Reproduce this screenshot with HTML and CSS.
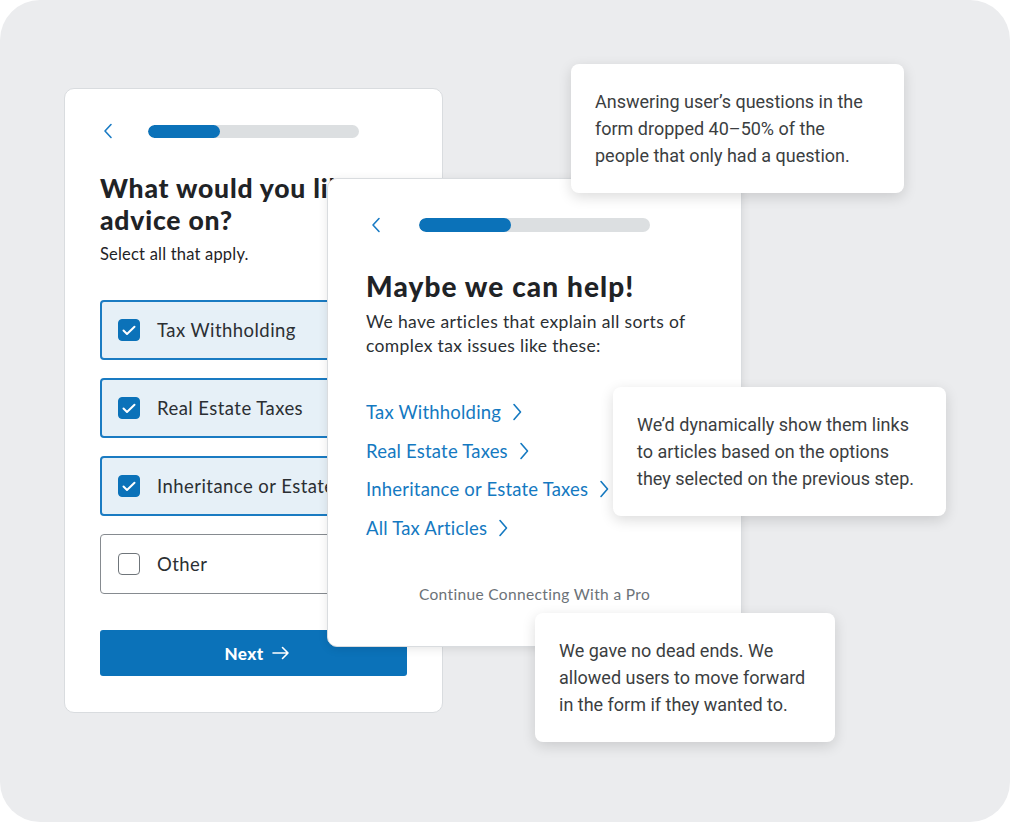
FILE: index.html
```html
<!DOCTYPE html>
<html lang="en">
<head>
<meta charset="utf-8">
<title>Tax advice flow</title>
<link rel="stylesheet" href="styles.css">
</head>
<body>
<div class="canvas">
  <section class="card card-form">
    <div class="topbar">
      <svg class="back" width="10" height="16" viewBox="0 0 10 16"><path d="M8 1.5 L2 8 L8 14.5" fill="none" stroke="#1a7bc4" stroke-width="1.6" stroke-linecap="round" stroke-linejoin="round"/></svg>
      <div class="progress p1"><div class="fill" style="width:34%"></div></div>
    </div>
    <h1 class="title">What would you like advice on?</h1>
    <p class="sub">Select all that apply.</p>
    <div class="options">
      <div class="option checked"><span class="box"><svg width="14" height="11" viewBox="0 0 14 11"><path d="M1.5 5.5 L5 9 L12.5 1.8" fill="none" stroke="#fff" stroke-width="2" stroke-linecap="round" stroke-linejoin="round"/></svg></span><span class="label">Tax Withholding</span></div>
      <div class="option checked"><span class="box"><svg width="14" height="11" viewBox="0 0 14 11"><path d="M1.5 5.5 L5 9 L12.5 1.8" fill="none" stroke="#fff" stroke-width="2" stroke-linecap="round" stroke-linejoin="round"/></svg></span><span class="label">Real Estate Taxes</span></div>
      <div class="option checked"><span class="box"><svg width="14" height="11" viewBox="0 0 14 11"><path d="M1.5 5.5 L5 9 L12.5 1.8" fill="none" stroke="#fff" stroke-width="2" stroke-linecap="round" stroke-linejoin="round"/></svg></span><span class="label">Inheritance or Estate Taxes</span></div>
      <div class="option"><span class="box"></span><span class="label">Other</span></div>
    </div>
    <button class="next">Next <svg width="18" height="14" viewBox="0 0 18 14"><path d="M1 7 H16 M10.5 1.5 L16 7 L10.5 12.5" fill="none" stroke="#fff" stroke-width="1.6" stroke-linecap="round" stroke-linejoin="round"/></svg></button>
  </section>

  <section class="card card-help">
    <div class="topbar">
      <svg class="back" width="10" height="16" viewBox="0 0 10 16"><path d="M8 1.5 L2 8 L8 14.5" fill="none" stroke="#1a7bc4" stroke-width="1.6" stroke-linecap="round" stroke-linejoin="round"/></svg>
      <div class="progress p2"><div class="fill" style="width:40%"></div></div>
    </div>
    <h2 class="title2">Maybe we can help!</h2>
    <p class="desc">We have articles that explain all sorts of complex tax issues like these:</p>
    <ul class="links">
      <li><a>Tax Withholding</a><svg class="chev" width="10" height="18" viewBox="0 0 10 18"><path d="M2 1.5 L8.5 9 L2 16.5" fill="none" stroke="#1479c1" stroke-width="1.6" stroke-linecap="round" stroke-linejoin="round"/></svg></li>
      <li><a>Real Estate Taxes</a><svg class="chev" width="10" height="18" viewBox="0 0 10 18"><path d="M2 1.5 L8.5 9 L2 16.5" fill="none" stroke="#1479c1" stroke-width="1.6" stroke-linecap="round" stroke-linejoin="round"/></svg></li>
      <li><a>Inheritance or Estate Taxes</a><svg class="chev" width="10" height="18" viewBox="0 0 10 18"><path d="M2 1.5 L8.5 9 L2 16.5" fill="none" stroke="#1479c1" stroke-width="1.6" stroke-linecap="round" stroke-linejoin="round"/></svg></li>
      <li><a>All Tax Articles</a><svg class="chev" width="10" height="18" viewBox="0 0 10 18"><path d="M2 1.5 L8.5 9 L2 16.5" fill="none" stroke="#1479c1" stroke-width="1.6" stroke-linecap="round" stroke-linejoin="round"/></svg></li>
    </ul>
    <p class="continue">Continue Connecting With a Pro</p>
  </section>

  <div class="note note-1">Answering user’s questions in the form dropped 40–50% of the people that only had a question.</div>
  <div class="note note-2">We’d dynamically show them links to articles based on the options they selected on the previous step.</div>
  <div class="note note-3">We gave no dead ends. We allowed users to move forward in the form if they wanted to.</div>
</div>
</body>
</html>
```

FILE: styles.css
```css
* { box-sizing: border-box; }
html, body { margin: 0; padding: 0; background: #ffffff; }
body { width: 1010px; height: 822px; overflow: hidden; }

.canvas {
  position: relative;
  width: 1010px;
  height: 822px;
  background: #ebecee;
  border-radius: 40px;
  padding: 88px 0 0 64px;
  font-family: Lato, "Open Sans", sans-serif;
  color: #1f2326;
}

.card {
  background: #ffffff;
  border: 1px solid #d9dcdf;
  border-radius: 10px;
}

.card-form {
  width: 379px;
  height: 625px;
  padding: 35px 0 0 35px;
  overflow: hidden;
}

.topbar {
  display: flex;
  align-items: center;
  height: 14px;
}
.back { flex: none; margin-left: 3px; }
.progress {
  background: #dcdfe1;
  border-radius: 7px;
  overflow: hidden;
}
.progress .fill { height: 100%; background: #0b72b9; border-radius: 7px; }
.p1 { width: 211px; height: 13px; margin-left: 35px; }
.p2 { width: 231px; height: 14px; margin-left: 38px; }

.title {
  margin: 34px 0 0;
  width: 300px;
  font-size: 26.5px;
  line-height: 32px;
  font-weight: 900;
  letter-spacing: 0.8px;
}
.sub {
  margin: 6px 0 0;
  font-size: 16.5px;
  line-height: 24px;
  letter-spacing: 0.2px;
}

.options {
  display: flex;
  flex-direction: column;
  gap: 18px;
  margin-top: 34px;
  width: 307px;
}
.option {
  height: 60px;
  display: flex;
  align-items: center;
  padding-left: 17px;
  border: 1px solid #868b90;
  border-radius: 4px;
  background: #fff;
  white-space: nowrap;
}
.option.checked {
  border: 2px solid #1a7bc2;
  background: #e6f0f7;
  padding-left: 16px;
}
.box {
  width: 22px;
  height: 22px;
  border: 1px solid #6f757a;
  border-radius: 4px;
  display: flex;
  align-items: center;
  justify-content: center;
  flex: none;
}
.checked .box { background: #0b72b9; border-color: #0b72b9; }
.label {
  margin-left: 17px;
  font-size: 18.5px;
  letter-spacing: 0.45px;
  color: #2b2f33;
}

.next {
  margin-top: 36px;
  width: 307px;
  height: 46px;
  border: none;
  border-radius: 3px;
  background: #0b72b9;
  color: #fff;
  font-family: Lato, sans-serif;
  font-weight: 900;
  font-size: 17px;
  letter-spacing: 0.4px;
  display: flex;
  align-items: center;
  justify-content: center;
  gap: 9px;
  padding: 0 0 0 8px;
}

.card-help {
  position: absolute;
  left: 327px;
  top: 178px;
  width: 415px;
  height: 469px;
  padding: 39px 0 0 38px;
  box-shadow: 0 2px 10px rgba(0,0,0,0.10);
}
.card-help .back { margin-left: 5px; }
.title2 {
  margin: 37px 0 0;
  font-size: 28px;
  line-height: 34px;
  font-weight: 900;
  letter-spacing: 1.1px;
}
.desc {
  margin: 7px 0 0;
  width: 345px;
  font-size: 17.5px;
  line-height: 24px;
  letter-spacing: 0.35px;
  color: #2b2f33;
}
.links {
  list-style: none;
  margin: 42px 0 0;
  padding: 0;
  display: flex;
  flex-direction: column;
  gap: 14.7px;
}
.links li {
  display: flex;
  align-items: center;
  height: 24px;
  gap: 11px;
}
.links a {
  color: #1479c1;
  font-size: 18.5px;
  letter-spacing: 0.2px;
}
.continue {
  margin: 45px 0 0 -38px;
  text-align: center;
  width: 413px;
  font-size: 15.5px;
  letter-spacing: 0.35px;
  color: #6c7278;
}

.note {
  position: absolute;
  background: #fff;
  border-radius: 8px;
  box-shadow: 0 4px 14px rgba(0,0,0,0.14);
  padding: 24px 20px 0 24px;
  height: 129px;
  font-family: Roboto, sans-serif;
  font-size: 18px;
  line-height: 27px;
  color: #3b3e41;
}
.note-1 { left: 571px; top: 64px; width: 333px; padding-right: 32px; }
.note-2 { left: 613px; top: 387px; width: 333px; }
.note-3 { left: 535px; top: 613px; width: 300px; }
```
